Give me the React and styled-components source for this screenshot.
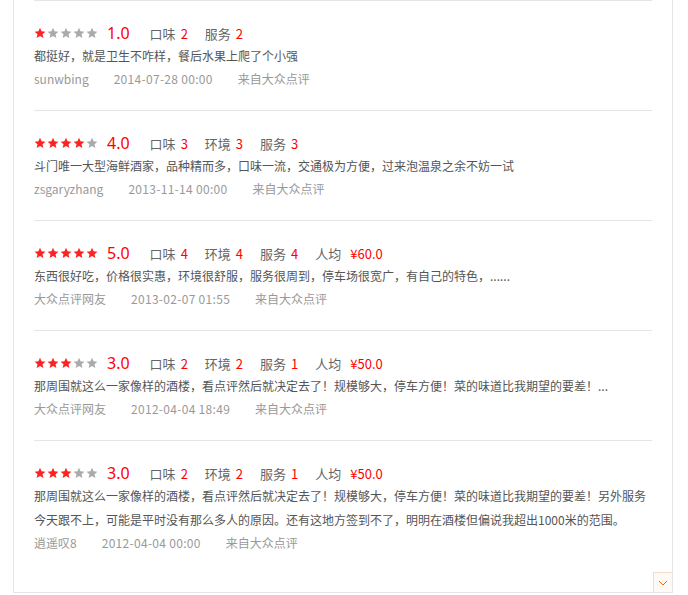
import React from 'react';
import styled, { createGlobalStyle } from 'styled-components';

const GlobalStyle = createGlobalStyle`
  html, body {
    margin: 0;
    padding: 0;
    background: #fff;
  }
  body {
    font-family: "Microsoft YaHei", "Noto Sans CJK SC", "Noto Sans", sans-serif;
  }
`;

const reviews = [
  {
    star: 1,
    scores: [['口味', '2'], ['服务', '2']],
    text: ['都挺好，就是卫生不咋样，餐后水果上爬了个小强'],
    user: 'sunwbing',
    time: '2014-07-28 00:00',
  },
  {
    star: 4,
    scores: [['口味', '3'], ['环境', '3'], ['服务', '3']],
    text: ['斗门唯一大型海鲜酒家，品种精而多，口味一流，交通极为方便，过来泡温泉之余不妨一试'],
    user: 'zsgaryzhang',
    time: '2013-11-14 00:00',
  },
  {
    star: 5,
    scores: [['口味', '4'], ['环境', '4'], ['服务', '4']],
    price: '¥60.0',
    text: ['东西很好吃，价格很实惠，环境很舒服，服务很周到，停车场很宽广，有自己的特色，......'],
    user: '大众点评网友',
    time: '2013-02-07 01:55',
  },
  {
    star: 3,
    scores: [['口味', '2'], ['环境', '2'], ['服务', '1']],
    price: '¥50.0',
    text: ['那周围就这么一家像样的酒楼，看点评然后就决定去了！规模够大，停车方便！菜的味道比我期望的要差！...'],
    user: '大众点评网友',
    time: '2012-04-04 18:49',
  },
  {
    star: 3,
    scores: [['口味', '2'], ['环境', '2'], ['服务', '1']],
    price: '¥50.0',
    text: [
      '那周围就这么一家像样的酒楼，看点评然后就决定去了！规模够大，停车方便！菜的味道比我期望的要差！另外服务',
      '今天跟不上，可能是平时没有那么多人的原因。还有这地方签到不了，明明在酒楼但偏说我超出1000米的范围。',
    ],
    user: '逍遥叹8',
    time: '2012-04-04 00:00',
  },
];

const Panel = styled.div`
  position: relative;
  box-sizing: border-box;
  margin-left: 13px;
  width: 660px;
  height: 593px;
  border-left: 1px solid #e5e5e5;
  border-right: 1px solid #e5e5e5;
  border-bottom: 1px solid #e5e5e5;
  padding: 0 20px 0 20px;
  overflow: hidden;
`;

const Item = styled.div`
  border-top: 1px solid #e5e5e5;
  padding: 21px 0 19px;
  min-height: 69px;
`;

const ScoreRow = styled.div`
  display: flex;
  align-items: center;
  height: 22px;
`;

const Stars = styled.span`
  display: flex;
  gap: 1px;
  margin-right: 9px;
`;

const Rating = styled.span`
  color: #f00;
  font-size: 16px;
  margin-right: 20px;
  font-family: "Microsoft YaHei", "Noto Sans", sans-serif;
`;

const Score = styled.span`
  color: #666;
  font-size: 13px;
  margin-right: 17px;
  b {
    font-weight: normal;
    color: #f00;
    margin-left: ${p => (p.$price ? '9px' : '5px')};
  }
`;

const Comment = styled.p`
  margin: 0;
  color: #555;
  font-size: 12px;
  line-height: 24px;
`;

const Meta = styled.div`
  display: flex;
  gap: 25px;
  color: #999;
  font-size: 12px;
  line-height: 21px;
  span:nth-child(2) {
    letter-spacing: 0.3px;
  }
`;

const More = styled.div`
  position: absolute;
  right: 0;
  bottom: 0;
  width: 18px;
  height: 19px;
  border-top: 1px solid #f5dcc8;
  border-left: 1px solid #f5dcc8;
  background: #fffaf5;
  display: flex;
  align-items: center;
  justify-content: center;
`;

const Star = ({ on }) => (
  <svg width="12" height="12" viewBox="0 0 24 24">
    <path
      d="M12 1.5l3.1 7.2 7.8.6-5.9 5.1 1.8 7.6L12 18l-6.8 4 1.8-7.6-5.9-5.1 7.8-.6z"
      fill={on ? '#f22' : '#aaa'}
    />
  </svg>
);

const Review = ({ r }) => (
  <Item>
    <ScoreRow>
      <Stars>
        {[1, 2, 3, 4, 5].map(i => (
          <Star key={i} on={i <= r.star} />
        ))}
      </Stars>
      <Rating>{r.star}.0</Rating>
      {r.scores.map(([k, v]) => (
        <Score key={k}>
          {k}<b>{v}</b>
        </Score>
      ))}
      {r.price && (
        <Score $price>
          人均<b>{r.price}</b>
        </Score>
      )}
    </ScoreRow>
    {r.text.map((t, i) => (
      <Comment key={i}>{t}</Comment>
    ))}
    <Meta>
      <span>{r.user}</span>
      <span>{r.time}</span>
      <span>来自大众点评</span>
    </Meta>
  </Item>
);

export default function App() {
  return (
    <>
      <GlobalStyle />
      <Panel>
        {reviews.map((r, i) => (
          <Review key={i} r={r} />
        ))}
        <More>
          <svg width="10" height="6" viewBox="0 0 10 6">
            <path d="M1 1l4 4 4-4" fill="none" stroke="#f60" strokeWidth="1" />
          </svg>
        </More>
      </Panel>
    </>
  );
}
